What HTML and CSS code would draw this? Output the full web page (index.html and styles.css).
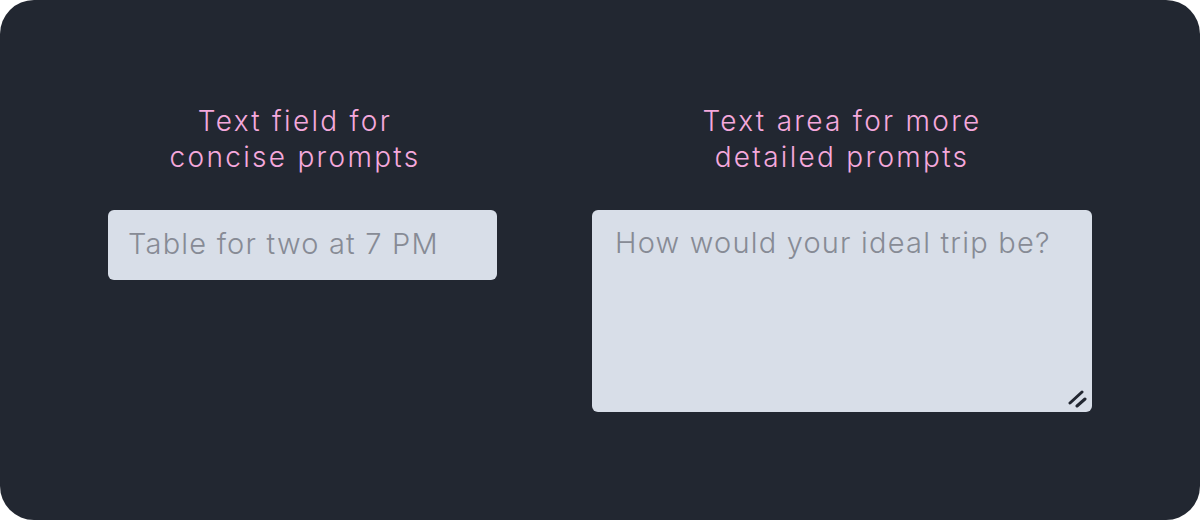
FILE: index.html
```html
<!DOCTYPE html>
<html lang="en">
<head>
<meta charset="utf-8">
<title>Prompt inputs</title>
<link rel="stylesheet" href="styles.css">
</head>
<body>
<main class="card">
  <section class="col col-left">
    <h2 class="label">Text field for<br>concise prompts</h2>
    <input class="field" type="text" placeholder="Table for two at 7 PM">
  </section>
  <section class="col col-right">
    <h2 class="label">Text area for more<br>detailed prompts</h2>
    <div class="area-wrap">
      <textarea class="area" placeholder="How would your ideal trip be?"></textarea>
      <svg class="grip" width="20" height="18" viewBox="0 0 20 18" aria-hidden="true">
        <path d="M2 13 L14 2" />
        <path d="M9 16 L17 9" />
      </svg>
    </div>
  </section>
</main>
</body>
</html>
```

FILE: styles.css
```css
html, body {
  margin: 0;
  padding: 0;
  background: #ffffff;
}

body {
  width: 1200px;
  height: 520px;
  font-family: "Inter", "Noto Sans", sans-serif;
}

.card {
  box-sizing: border-box;
  width: 1200px;
  height: 520px;
  background: #222731;
  border-radius: 34px;
  display: grid;
  grid-template-columns: 500px 500px;
  column-gap: 47px;
  padding: 103px 0 0 45px;
  align-items: start;
}

.col {
  display: flex;
  flex-direction: column;
  align-items: center;
}

.label {
  margin: 0 0 35px;
  font-weight: 300;
  font-size: 28px;
  line-height: 36px;
  letter-spacing: 2.3px;
  color: #f5a9dd;
  text-align: center;
}

.field,
.area {
  box-sizing: border-box;
  border: none;
  outline: none;
  background: #d8dee8;
  border-radius: 6px;
  font-family: inherit;
  font-weight: 300;
  font-size: 29px;
  letter-spacing: 1.2px;
  color: #3a3f4a;
}

.field::placeholder,
.area::placeholder {
  color: #878b95;
  opacity: 1;
}

.col-left {
  align-items: flex-start;
}

.col-left .label {
  align-self: center;
}

.field {
  width: 389px;
  height: 70px;
  margin-left: 63px;
  padding: 0 20px 3px;
}

.area-wrap {
  position: relative;
  width: 500px;
  height: 202px;
}

.area {
  display: block;
  width: 100%;
  height: 100%;
  padding: 16px 23px;
  resize: none;
  line-height: 34px;
}

.grip {
  position: absolute;
  right: 4px;
  bottom: 4px;
  fill: none;
  stroke: #222731;
  stroke-width: 3;
  stroke-linecap: round;
}
```
